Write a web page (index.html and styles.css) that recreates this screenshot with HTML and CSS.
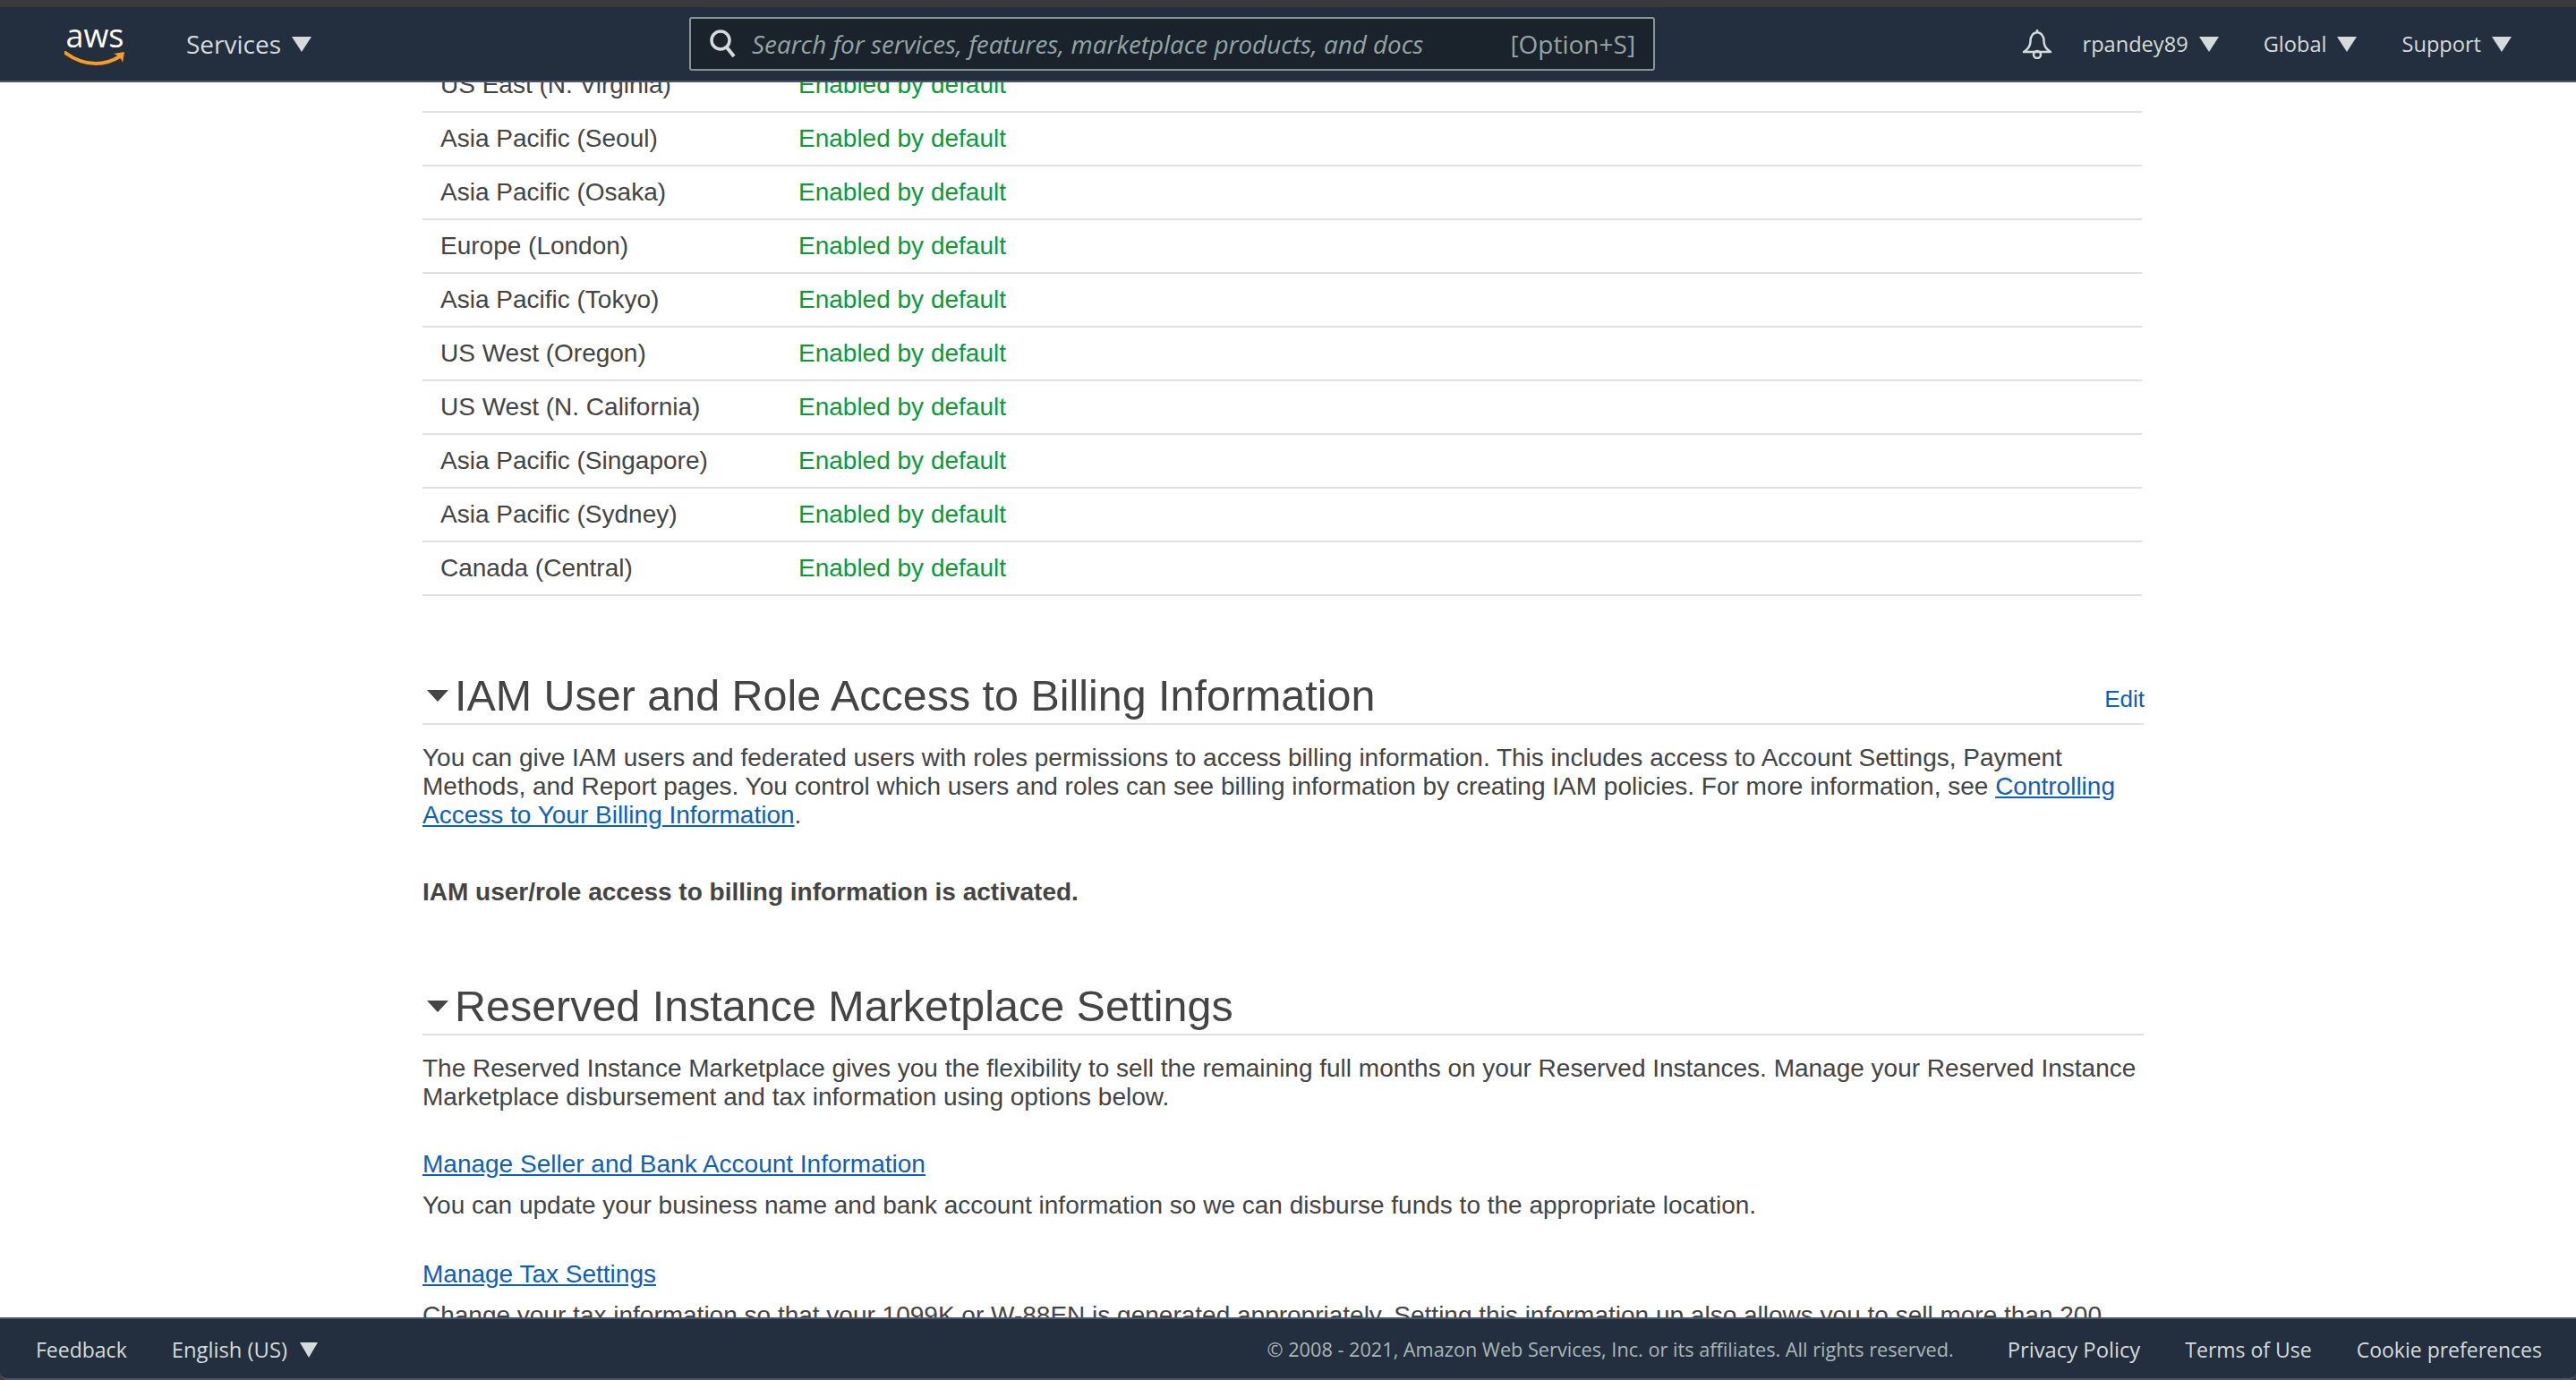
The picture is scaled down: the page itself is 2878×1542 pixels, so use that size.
FILE: index.html
```html
<!DOCTYPE html>
<html lang="en">
<head>
	<meta charset="UTF-8">
	<title>Account Settings</title>
	<link rel="stylesheet" href="styles.css">
</head>
<body>
	<div class="window">
		<header class="nav">
			<a class="logo">
				<span class="logo-text">aws</span>
				<svg class="smile" viewBox="0 0 68 16" width="68" height="16">
					<path d="M1 2C12 10 24 14 35 14C45 14 54 11 62 6" fill="none" stroke="#f79c25" stroke-width="4" stroke-linecap="round"/>
					<path d="M55 3L67 1L65 13C64 9 60 5 55 3Z" fill="#f79c25"/>
				</svg>
			</a>
			<a class="nav-item services">Services<i class="caret"></i></a>
			<div class="search">
				<svg class="search-icon" viewBox="0 0 30 34" width="30" height="34">
					<circle cx="13" cy="13" r="10" fill="none" stroke="#d5dbdb" stroke-width="3.5"/>
					<path d="M20 21L28 31" stroke="#d5dbdb" stroke-width="4"/>
				</svg>
				<span class="search-text">Search for services, features, marketplace products, and docs</span>
				<span class="search-key">[Option+S]</span>
			</div>
			<div class="nav-right">
				<svg class="bell" viewBox="0 0 34 34" width="34" height="34">
					<path d="M17 1V4M17 4C12 5 9.500 9 9.500 14C9.500 19 7 23 2 26H32C27 23 24.500 19 24.500 14C24.500 9 22 5 17 4Z" fill="none" stroke="#d5dbdb" stroke-width="2.500" stroke-linejoin="round"/>
					<circle cx="17" cy="29" r="4" fill="none" stroke="#d5dbdb" stroke-width="2.500"/>
				</svg>
				<a class="nav-item small user">rpandey89<i class="caret"></i></a>
				<a class="nav-item small">Global<i class="caret"></i></a>
				<a class="nav-item small">Support<i class="caret"></i></a>
			</div>
		</header>

		<main class="main">
			<div class="page">
				<table class="regions">
					<tr><td class="name">US East (N. Virginia)</td><td class="on">Enabled by default</td></tr>
					<tr><td class="name">Asia Pacific (Seoul)</td><td class="on">Enabled by default</td></tr>
					<tr><td class="name">Asia Pacific (Osaka)</td><td class="on">Enabled by default</td></tr>
					<tr><td class="name">Europe (London)</td><td class="on">Enabled by default</td></tr>
					<tr><td class="name">Asia Pacific (Tokyo)</td><td class="on">Enabled by default</td></tr>
					<tr><td class="name">US West (Oregon)</td><td class="on">Enabled by default</td></tr>
					<tr><td class="name">US West (N. California)</td><td class="on">Enabled by default</td></tr>
					<tr><td class="name">Asia Pacific (Singapore)</td><td class="on">Enabled by default</td></tr>
					<tr><td class="name">Asia Pacific (Sydney)</td><td class="on">Enabled by default</td></tr>
					<tr><td class="name">Canada (Central)</td><td class="on">Enabled by default</td></tr>
				</table>

				<section class="block first">
					<div class="block-head">
						<i class="arrow"></i>
						<h2>IAM User and Role Access to Billing Information</h2>
						<a class="edit">Edit</a>
					</div>
					<p>You can give IAM users and federated users with roles permissions to access billing information. This includes access to Account Settings, Payment Methods, and Report pages. You control which users and roles can see billing information by creating IAM policies. For more information, see <a class="link">Controlling Access to Your Billing Information</a>.</p>
					<p class="status">IAM user/role access to billing information is activated.</p>
				</section>

				<section class="block second">
					<div class="block-head">
						<i class="arrow"></i>
						<h2>Reserved Instance Marketplace Settings</h2>
					</div>
					<p>The Reserved Instance Marketplace gives you the flexibility to sell the remaining full months on your Reserved Instances. Manage your Reserved Instance Marketplace disbursement and tax information using options below.</p>
					<p class="manage"><a class="link">Manage Seller and Bank Account Information</a></p>
					<p class="manage-text">You can update your business name and bank account information so we can disburse funds to the appropriate location.</p>
					<p class="manage"><a class="link">Manage Tax Settings</a></p>
					<p class="manage-text">Change your tax information so that your 1099K or W-88EN is generated appropriately. Setting this information up also allows you to sell more than 200</p>
				</section>
			</div>
		</main>

		<footer class="footer">
			<a class="foot-item">Feedback</a>
			<a class="foot-item wide lang">English (US)<i class="caret"></i></a>
			<div class="foot-right">
				<span class="copy">© 2008 - 2021, Amazon Web Services, Inc. or its affiliates. All rights reserved.</span>
				<a class="foot-item wide">Privacy Policy</a>
				<a class="foot-item">Terms of Use</a>
				<a class="foot-item">Cookie preferences</a>
			</div>
		</footer>
	</div>
</body>
</html>
```

FILE: styles.css
```css
* {
	padding: 0;
	margin: 0;
	box-sizing: border-box;
}

html, body {
	height: 100%;
	overflow: hidden;
	background: #3a3a3c;
}

.window {
	height: 1542px;
	display: flex;
	flex-direction: column;
	padding-top: 8px;
	font-family: "Liberation Sans", Arial, sans-serif;
	font-size: 28px;
	line-height: 32px;
	color: #444;
}

/* top bar */
.nav {
	height: 84px;
	flex: none;
	display: flex;
	align-items: center;
	background: #232f3e;
	border-bottom: 2px solid #4b5563;
	font-family: "Open Sans", sans-serif;
	color: #d5dbdb;
}

.logo {
	width: 68px;
	margin-left: 72px;
	display: flex;
	flex-direction: column;
	align-items: center;
}

.logo-text {
	font-family: "Open Sans", sans-serif;
	font-size: 36px;
	line-height: 30px;
	color: #fff;
}

.smile {
	display: block;
	margin-top: 2px;
}

.nav-item {
	display: flex;
	align-items: center;
	font-size: 28px;
	white-space: nowrap;
}

.nav-item.small {
	font-size: 23.6px;
	margin-left: 50px;
}

.services {
	margin-left: 68px;
}

.caret {
	display: block;
	width: 0;
	height: 0;
	margin-left: 12px;
	border-left: 11px solid transparent;
	border-right: 11px solid transparent;
	border-top: 17px solid #d5dbdb;
}

.search {
	width: 1079px;
	height: 60px;
	margin-left: 422px;
	display: flex;
	align-items: center;
	padding: 0 20px 0 20px;
	background: #1a222c;
	border: 2px solid #879596;
	border-radius: 3px;
	color: #95a5a6;
}

.search-icon {
	flex: none;
}

.search-text {
	margin-left: 18px;
	font-style: italic;
	font-size: 27.8px;
	white-space: nowrap;
}

.search-key {
	margin-left: auto;
	font-size: 28px;
}

.nav-right {
	margin-left: auto;
	padding-right: 72px;
	display: flex;
	align-items: center;
}

.nav-right .user {
	margin-left: 34px;
}

/* page */
.main {
	flex: 1;
	overflow: hidden;
	background: #fff;
}

.page {
	width: 1923px;
	margin: -27px 0 0 472px;
}

.regions {
	width: 1921px;
	border-collapse: collapse;
}

.regions td {
	height: 60px;
	border-bottom: 2px solid #e1e1e1;
	vertical-align: middle;
}

.regions .name {
	width: 420px;
	padding-left: 20px;
}

.on {
	color: #0b9a38;
}

.block-head {
	height: 70px;
	padding-top: 6px;
	display: flex;
	align-items: center;
	border-bottom: 2px solid #e1e1e1;
}

.arrow {
	display: block;
	width: 0;
	height: 0;
	margin: 0 7px 0 5px;
	border-left: 12px solid transparent;
	border-right: 12px solid transparent;
	border-top: 13px solid #444;
}

h2 {
	font-size: 48.44px;
	font-weight: normal;
	line-height: 60px;
}

.edit {
	margin-left: auto;
	margin-right: -1px;
	margin-top: 8px;
	font-size: 26px;
	color: #0e5fb9;
}

.link {
	color: #0e5fb9;
	text-decoration: underline;
}

.block p {
	margin-top: 21px;
}

.first {
	margin-top: 74px;
}

.block .status {
	margin-top: 54px;
	font-weight: bold;
}

.second {
	margin-top: 74px;
}

.block .manage {
	margin-top: 43px;
}

.block .manage-text {
	margin-top: 14px;
	white-space: nowrap;
}

.block .manage-text + .manage {
	margin-top: 45px;
}

/* bottom bar */
.footer {
	height: 70px;
	flex: none;
	display: flex;
	align-items: center;
	padding: 2px 38px 0 40px;
	background: #232f3e;
	border-top: 2px solid #4b5563;
	border-bottom: 2px solid #4b5563;
	border-radius: 0 0 8px 8px;
	font-family: "Open Sans", sans-serif;
	color: #d5dbdb;
}

.foot-item {
	display: flex;
	align-items: center;
	font-size: 23px;
	white-space: nowrap;
}

.foot-item.wide {
	font-size: 23.8px;
}

.lang {
	margin-left: 50px;
}

.lang .caret {
	margin-left: 14px;
	border-left-width: 10px;
	border-right-width: 10px;
	border-top-width: 17px;
}

.foot-right {
	margin-left: auto;
	display: flex;
	align-items: center;
	gap: 50px;
}

.copy {
	font-size: 21.7px;
	color: #aab7b8;
	margin-right: 10px;
}
```
